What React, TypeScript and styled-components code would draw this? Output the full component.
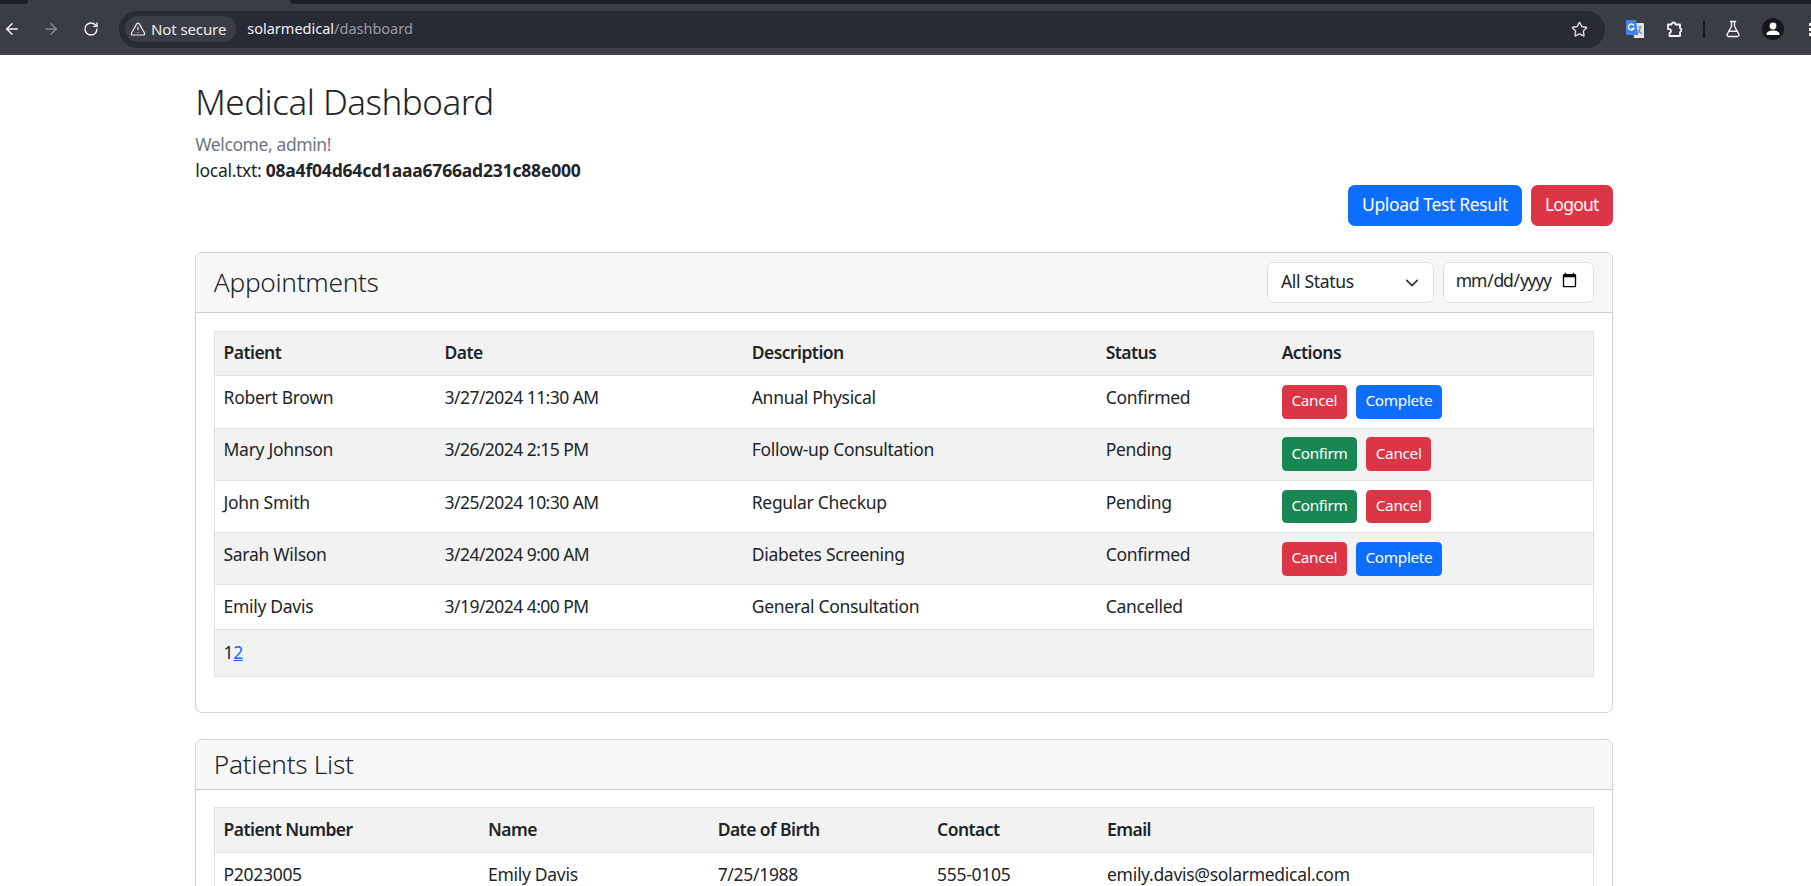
import { createGlobalStyle, styled } from "styled-components";
import { ArrowLeft, ArrowRight, FlaskConical, RotateCw, Star, TriangleAlert } from "lucide-react";

const GlobalStyle = createGlobalStyle`
  html {
    font-size: 17.5px;
    overflow: hidden;
  }

  body {
    margin: 0;
    background: #fff;
    color: #212529;
    font-family: "Noto Sans", sans-serif;
    font-size: 1rem;
    line-height: 1.5;
    letter-spacing: -0.3px;
    overflow: hidden;
  }

  * {
    box-sizing: border-box;
  }
`;

const Browser = styled.header`
  height: 55px;
  background: #3a3d46;
  border-bottom: 1px solid #4a4c53;
  letter-spacing: 0;
`;

const TabStrip = styled.div`
  display: flex;
  height: 4px;
`;

const TabEdge = styled.div<{ $side: "left" | "right" }>`
  background: #1b1e2b;
  ${(p) =>
    p.$side === "left"
      ? "width: 28px; border-bottom-right-radius: 6px;"
      : "flex: 1; margin-left: 262px; border-bottom-left-radius: 6px;"}
`;

const Toolbar = styled.div`
  display: flex;
  align-items: center;
  height: 50px;
  margin-left: -8px;
`;

const NavButton = styled.span<{ $dim?: boolean }>`
  display: flex;
  justify-content: center;
  align-items: center;
  flex: none;
  width: 39.5px;
  color: ${(p) => (p.$dim ? "#85878d" : "#f4f5f6")};
`;

const Omnibox = styled.div`
  display: flex;
  align-items: center;
  flex: 1;
  height: 37px;
  margin-left: 8.5px;
  padding: 0 17px 0 6px;
  border-radius: 19px;
  background: #282a36;
  font-size: 15px;
`;

const SecurityChip = styled.span`
  display: flex;
  align-items: center;
  gap: 5px;
  height: 26px;
  padding: 0 10px 0 5px;
  border-radius: 13px;
  background: #3a3d46;
  color: #eceded;
  letter-spacing: -0.1px;
`;

const Address = styled.span`
  flex: 1;
  margin-left: 11px;
  color: #f1f1f3;
  font-size: 14.5px;
`;

const AddressPath = styled.span`
  color: #9a9ca3;
`;

const Extensions = styled.div`
  display: flex;
  align-items: center;
  flex: none;
  width: 206px;
  padding-left: 10px;
  overflow: hidden;
`;

const ExtensionSlot = styled.span`
  display: flex;
  justify-content: center;
  align-items: center;
  flex: none;
  width: 40px;
  color: #f4f5f6;
`;

const Divider = styled.span`
  flex: none;
  width: 2px;
  height: 17px;
  margin: 0 8px;
  background: #15171f;
`;

const MenuDots = styled.span`
  display: flex;
  flex-direction: column;
  flex: none;
  gap: 2px;
  margin-left: 16px;
`;

const MenuDot = styled.i`
  display: block;
  width: 4px;
  height: 3px;
  background: #f4f5f6;
`;

const Page = styled.main`
  width: 1417.5px;
  margin-left: 195.3px;
  padding-top: 1.5rem;
`;

const Title = styled.h1`
  margin: 0 0 7.75px;
  font-size: 2rem;
  font-weight: 300;
  letter-spacing: -0.5px;
  line-height: 1.2;
`;

const Welcome = styled.p`
  margin: 0;
  color: #6c757d;
  letter-spacing: -0.4px;
`;

const LocalProof = styled.p`
  margin: 0;

  strong {
    letter-spacing: -0.19px;
  }
`;

const HeaderActions = styled.div`
  display: flex;
  justify-content: flex-end;
  gap: 8.75px;
  margin: 1px 0 1.5rem;
`;

const tones = {
  primary: "#0d6efd",
  danger: "#dc3545",
  success: "#198754",
};

type Tone = keyof typeof tones;

const Button = styled.button<{ $tone: Tone; $small?: boolean }>`
  padding: ${(p) => (p.$small ? "3.4px 0.5rem 5.4px" : "5.56px 0.75rem 7.56px")};
  border: 1px solid ${(p) => tones[p.$tone]};
  border-radius: ${(p) => (p.$small ? "0.25rem" : "0.375rem")};
  background: ${(p) => tones[p.$tone]};
  color: #fff;
  font-family: inherit;
  font-size: ${(p) => (p.$small ? "0.875rem" : "1rem")};
  letter-spacing: ${(p) => (p.$small ? "-0.3px" : "-0.35px")};
  line-height: 1.5;
`;

const LogoutButton = styled(Button)`
  letter-spacing: -0.75px;
`;

const Card = styled.section`
  margin-bottom: 25.5px;
  border: 1px solid rgba(0, 0, 0, 0.175);
  border-radius: 0.375rem;
`;

const CardHeader = styled.div`
  display: flex;
  justify-content: space-between;
  align-items: center;
  padding: 0.5rem 1rem;
  border-bottom: 1px solid rgba(0, 0, 0, 0.175);
  border-radius: 0.375rem 0.375rem 0 0;
  background: #f7f7f7;
`;

const CardTitle = styled.h4`
  margin: 0;
  font-size: 1.5rem;
  font-weight: 300;
  letter-spacing: -0.3px;
  line-height: 1.2;
`;

const Filters = styled.div`
  display: flex;
  gap: 9px;
`;

const SelectWrap = styled.div`
  position: relative;
  width: 167px;
`;

const StatusSelect = styled.select`
  width: 100%;
  height: 41.5px;
  padding: 5.5px 0.75rem 7.5px;
  border: 1px solid #dee2e6;
  border-radius: 0.375rem;
  background: #fff;
  color: #212529;
  font-family: inherit;
  font-size: 1rem;
  letter-spacing: -0.3px;
  line-height: 1.5;
  appearance: none;
`;

const SelectChevron = styled.svg`
  position: absolute;
  top: 14px;
  right: 15px;
  width: 14px;
  height: 14px;
  fill: none;
  stroke: #343a40;
  stroke-width: 2;
  stroke-linecap: round;
  stroke-linejoin: round;
`;

const DateInput = styled.input`
  width: 151.5px;
  height: 41.5px;
  padding: 4.5px 0.75rem 8.5px 11px;
  border: 1px solid #dee2e6;
  border-radius: 0.375rem;
  background: #fff;
  color: #212529;
  font-family: inherit;
  font-size: 1rem;
  letter-spacing: -1.2px;
  line-height: 1.5;
`;

const CardBody = styled.div`
  padding: 1rem;
`;

const Table = styled.table`
  width: 100%;
  margin-bottom: 1rem;
  border-collapse: collapse;
  table-layout: fixed;
`;

const Col = styled.col<{ $width: number }>`
  width: ${(p) => p.$width}px;
`;

const HeadRow = styled.tr`
  background: #f2f2f2;
`;

const Row = styled.tr`
  &:nth-child(even) {
    background: #f2f2f2;
  }
`;

const Cell = styled.td`
  padding: 7.75px 0.5rem 9.75px;
  border-top: 1px solid #dee2e6;
  border-bottom: 1px solid #dee2e6;
  vertical-align: top;

  &:first-child {
    border-left: 1px solid #dee2e6;
  }

  &:last-child {
    border-right: 1px solid #dee2e6;
  }
`;

const DateCell = styled(Cell)`
  letter-spacing: -0.55px;
`;

const HeadCell = styled(Cell).attrs({ as: "th" })`
  font-weight: 600;
  letter-spacing: -0.55px;
  text-align: left;
`;

const PagerCell = styled(Cell)`
  padding: 9px 0.5rem 11px;
`;

const RowActions = styled.div`
  display: flex;
  gap: 8.75px;
  margin: 1px 0 -1px;
`;

const PageLink = styled.a`
  color: #0d6efd;
  text-decoration: underline;
`;

type Action = { label: string; tone: Tone };

const cancel: Action = { label: "Cancel", tone: "danger" };
const complete: Action = { label: "Complete", tone: "primary" };
const confirm: Action = { label: "Confirm", tone: "success" };

const appointments = [
  { id: 1, patient: "Robert Brown", date: "3/27/2024 11:30 AM", description: "Annual Physical", status: "Confirmed", actions: [cancel, complete] },
  { id: 2, patient: "Mary Johnson", date: "3/26/2024 2:15 PM", description: "Follow-up Consultation", status: "Pending", actions: [confirm, cancel] },
  { id: 3, patient: "John Smith", date: "3/25/2024 10:30 AM", description: "Regular Checkup", status: "Pending", actions: [confirm, cancel] },
  { id: 4, patient: "Sarah Wilson", date: "3/24/2024 9:00 AM", description: "Diabetes Screening", status: "Confirmed", actions: [cancel, complete] },
  { id: 5, patient: "Emily Davis", date: "3/19/2024 4:00 PM", description: "General Consultation", status: "Cancelled", actions: [] },
];

const appointmentCols = [221.5, 307.2, 354, 175.9, 321];
const patientCols = [265, 229.6, 219.4, 170, 495.5];

function TranslateIcon() {
  return (
    <svg width="20" height="20" viewBox="0 0 20 20">
      <path d="M7 4h11a1 1 0 0 1 1 1v14H9z" fill="#dfe3e6" />
      <path d="M13 8h4M15 8v1c0 2-1.5 5-3.5 6M13 11c1 2 2.500 3 4 4" stroke="#6f8c93" strokeWidth="1.2" fill="none" />
      <path d="M1 1h10l2 15H1z" fill="#3f82ee" />
      <path d="M9 6.500a3 3 0 1 0 0 3H6.500" stroke="#fff" strokeWidth="1.300" fill="none" />
    </svg>
  );
}

function PuzzleIcon() {
  return (
    <svg width="20" height="20" viewBox="0 0 20 20" fill="none" stroke="currentColor" strokeWidth="1.800" strokeLinejoin="round">
      <path d="M3 5.500h3.500a2 2 0 0 1 4 0H15v3.700a2 2 0 0 1 0 3.800V17H4.500v-2.800a2.200 2.200 0 0 0 0-4.200H3z" />
    </svg>
  );
}

function AvatarIcon() {
  return (
    <svg width="22" height="22" viewBox="0 0 22 22">
      <circle cx="11" cy="11" r="11" fill="#15171c" />
      <circle cx="11" cy="8" r="3.400" fill="#fff" />
      <path d="M4.500 17v-1c0-2 3-3.500 6.500-3.500s6.500 1.500 6.500 3.500v1z" fill="#fff" />
    </svg>
  );
}

export default function App() {
  return (
    <>
      <GlobalStyle />
      <Browser>
        <TabStrip>
          <TabEdge $side="left" />
          <TabEdge $side="right" />
        </TabStrip>
        <Toolbar>
          <NavButton>
            <ArrowLeft size={18} strokeWidth={2} />
          </NavButton>
          <NavButton $dim>
            <ArrowRight size={18} strokeWidth={2} />
          </NavButton>
          <NavButton>
            <RotateCw size={16} strokeWidth={2} />
          </NavButton>
          <Omnibox>
            <SecurityChip>
              <TriangleAlert size={16} strokeWidth={1.8} />
              Not secure
            </SecurityChip>
            <Address>
              solarmedical<AddressPath>/dashboard</AddressPath>
            </Address>
            <Star size={17} strokeWidth={2} color="#d8d9dc" />
          </Omnibox>
          <Extensions>
            <ExtensionSlot>
              <TranslateIcon />
            </ExtensionSlot>
            <ExtensionSlot>
              <PuzzleIcon />
            </ExtensionSlot>
            <Divider />
            <ExtensionSlot>
              <FlaskConical size={18} strokeWidth={1.8} />
            </ExtensionSlot>
            <ExtensionSlot>
              <AvatarIcon />
            </ExtensionSlot>
            <MenuDots>
              <MenuDot />
              <MenuDot />
              <MenuDot />
            </MenuDots>
          </Extensions>
        </Toolbar>
      </Browser>

      <Page>
        <Title>Medical Dashboard</Title>
        <Welcome>Welcome, admin!</Welcome>
        <LocalProof>
          local.txt: <strong>08a4f04d64cd1aaa6766ad231c88e000</strong>
        </LocalProof>
        <HeaderActions>
          <Button $tone="primary">Upload Test Result</Button>
          <LogoutButton $tone="danger">Logout</LogoutButton>
        </HeaderActions>

        <Card>
          <CardHeader>
            <CardTitle>Appointments</CardTitle>
            <Filters>
              <SelectWrap>
                <StatusSelect defaultValue="all">
                  <option value="all">All Status</option>
                </StatusSelect>
                <SelectChevron viewBox="0 0 16 16">
                  <path d="m2 5 6 6 6-6" />
                </SelectChevron>
              </SelectWrap>
              <DateInput type="date" />
            </Filters>
          </CardHeader>
          <CardBody>
            <Table>
              <colgroup>
                {appointmentCols.map((w, i) => (
                  <Col key={i} $width={w} />
                ))}
              </colgroup>
              <thead>
                <HeadRow>
                  <HeadCell>Patient</HeadCell>
                  <HeadCell>Date</HeadCell>
                  <HeadCell>Description</HeadCell>
                  <HeadCell>Status</HeadCell>
                  <HeadCell>Actions</HeadCell>
                </HeadRow>
              </thead>
              <tbody>
                {appointments.map((a) => (
                  <Row key={a.id}>
                    <Cell>{a.patient}</Cell>
                    <DateCell>{a.date}</DateCell>
                    <Cell>{a.description}</Cell>
                    <Cell>{a.status}</Cell>
                    <Cell>
                      <RowActions>
                        {a.actions.map((action) => (
                          <Button key={action.label} $tone={action.tone} $small>
                            {action.label}
                          </Button>
                        ))}
                      </RowActions>
                    </Cell>
                  </Row>
                ))}
                <Row>
                  <PagerCell colSpan={5}>
                    1<PageLink href="#">2</PageLink>
                  </PagerCell>
                </Row>
              </tbody>
            </Table>
          </CardBody>
        </Card>

        <Card>
          <CardHeader>
            <CardTitle>Patients List</CardTitle>
          </CardHeader>
          <CardBody>
            <Table>
              <colgroup>
                {patientCols.map((w, i) => (
                  <Col key={i} $width={w} />
                ))}
              </colgroup>
              <thead>
                <HeadRow>
                  <HeadCell>Patient Number</HeadCell>
                  <HeadCell>Name</HeadCell>
                  <HeadCell>Date of Birth</HeadCell>
                  <HeadCell>Contact</HeadCell>
                  <HeadCell>Email</HeadCell>
                </HeadRow>
              </thead>
              <tbody>
                <Row>
                  <Cell>P2023005</Cell>
                  <Cell>Emily Davis</Cell>
                  <Cell>7/25/1988</Cell>
                  <Cell>555-0105</Cell>
                  <Cell>emily.davis@solarmedical.com</Cell>
                </Row>
              </tbody>
            </Table>
          </CardBody>
        </Card>
      </Page>
    </>
  );
}
